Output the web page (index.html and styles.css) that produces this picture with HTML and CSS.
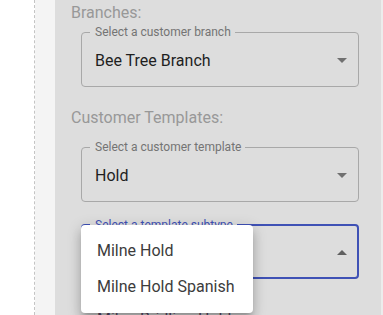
FILE: index.html
```html
<!DOCTYPE html>
<html lang="en">
<head>
<meta charset="utf-8">
<title>Template selection</title>
<link rel="stylesheet" href="styles.css">
</head>
<body>
<div class="page">
  <div class="gutter"></div>
  <div class="side"></div>
  <div class="panel">
    <div class="section-label first">Branches:</div>
    <fieldset class="field f1">
      <legend>Select a customer branch</legend>
      <div class="value-row">
        <span class="value">Bee Tree Branch</span>
        <svg class="arrow" width="10" height="5" viewBox="0 0 10 5"><path d="M0 0l5 5 5-5z" fill="#707070"/></svg>
      </div>
    </fieldset>
    <div class="section-label second">Customer Templates:</div>
    <fieldset class="field f2">
      <legend>Select a customer template</legend>
      <div class="value-row">
        <span class="value">Hold</span>
        <svg class="arrow" width="10" height="5" viewBox="0 0 10 5"><path d="M0 0l5 5 5-5z" fill="#707070"/></svg>
      </div>
    </fieldset>
    <div class="select-wrap">
      <fieldset class="field f3 focused">
        <legend>Select a template subtype</legend>
        <div class="value-row">
          <span class="value"></span>
          <svg class="arrow" width="10" height="5" viewBox="0 0 10 5"><path d="M0 5l5-5 5 5z" fill="#606060"/></svg>
        </div>
      </fieldset>
      <ul class="menu">
        <li>Milne Hold</li>
        <li>Milne Hold Spanish</li>
      </ul>
    </div>
    <div class="under-text">Milne Bridling Hold</div>
  </div>
  <div class="edge"></div>
</div>
</body>
</html>
```
FILE: styles.css
```css
html, body {
  margin: 0;
  padding: 0;
  background: #ffffff;
  font-family: Roboto, "Noto Sans", Arial, sans-serif;
  overflow: hidden;
}
.page {
  display: flex;
  height: 315px;
  width: 383px;
}
.gutter {
  width: 34px;
  flex: none;
  background: #ffffff;
  border-right: 1px dashed #c4c4c4;
}
.side {
  width: 20px;
  flex: none;
  background: #f4f4f4;
}
.panel {
  width: 326px;
  flex: none;
  background: #dddddd;
  padding: 0 22px 0 16px;
  box-sizing: border-box;
}
.edge {
  flex: 1;
  background: #ececec;
}
.section-label {
  font-size: 16px;
  line-height: 19px;
  color: #989898;
}
.section-label.first { margin-top: 3px; }
.section-label.second { margin-top: 21px; }

.field {
  margin: 0 0 0 10px;
  width: 278px;
  box-sizing: border-box;
  border: 1px solid #a8a8a8;
  border-radius: 4px;
  padding: 0 8px;
  min-width: 0;
}
.f1 { margin-top: 3px; }
.f2 { margin-top: 13px; }
.field legend {
  font-size: 12px;
  line-height: 14px;
  color: #747474;
  padding: 0 4px 0 5px;
  margin-left: 0;
}
.value-row {
  display: flex;
  align-items: center;
  justify-content: space-between;
  padding: 12px 3px 16px 5px;
}
.value {
  font-size: 16px;
  line-height: 19px;
  height: 19px;
  color: #1f1f1f;
}
.arrow { display: block; flex: none; }

.select-wrap {
  position: relative;
  margin-top: 16px;
}
.field.focused {
  border: 2px solid #3f51b5;
  padding: 0 7px;
}
.field.focused legend { color: #3f51b5; }
.field.focused .value-row { padding: 11px 3px 15px 5px; }

.menu {
  position: absolute;
  left: 10px;
  top: 7px;
  margin: 0;
  padding: 8px 0;
  list-style: none;
  background: #ffffff;
  border-radius: 4px;
  width: 172px;
  box-sizing: border-box;
  box-shadow: 0 5px 5px -3px rgba(0,0,0,0.2), 0 8px 10px 1px rgba(0,0,0,0.14), 0 3px 14px 2px rgba(0,0,0,0.12);
  z-index: 2;
}
.menu li {
  height: 36px;
  line-height: 36px;
  padding: 0 16px;
  font-size: 16px;
  color: #3c3c3c;
  white-space: nowrap;
}
.under-text {
  margin: 30px 0 0 26px;
  font-size: 16px;
  line-height: 19px;
  color: #5a4a6a;
}
```
